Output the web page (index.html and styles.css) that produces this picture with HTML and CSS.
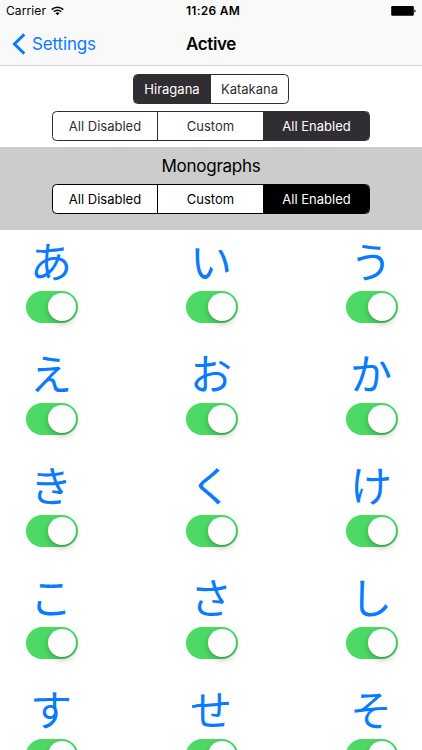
FILE: index.html
```html
<!DOCTYPE html>
<html lang="en">
<head>
<meta charset="utf-8">
<title>Active</title>
<link rel="stylesheet" href="styles.css">
</head>
<body>
<header class="top">
  <div class="status">
    <div class="carrier"><span>Carrier</span>
      <svg width="13" height="10" viewBox="0 0 13 10"><g fill="none" stroke="#000" stroke-width="1.5"><path d="M.7 3.6a8.3 8.3 0 0 1 11.6 0"/><path d="M2.8 5.8a5.3 5.3 0 0 1 7.4 0"/></g><path d="M6.5 9.3 4.5 7.3a2.9 2.9 0 0 1 4 0z"/></svg>
    </div>
    <div class="time">11:26 AM</div>
    <svg class="battery" width="25" height="10" viewBox="0 0 25 10"><rect x=".2" y=".1" width="22.6" height="9.7" rx="1.2"/><path d="M23.4 3.4q1.2.2 1.2 1.6t-1.2 1.6z"/></svg>
  </div>
  <nav class="nav">
    <a class="back"><svg width="14" height="22" viewBox="0 0 14 22"><path d="M12.3 1.4 2.4 11l9.9 9.6" fill="none" stroke="#0a7aff" stroke-width="2.9"/></svg><span>Settings</span></a>
    <h1>Active</h1>
  </nav>
</header>
<section class="filters">
  <div class="segments pair"><span class="on">Hiragana</span><span>Katakana</span></div>
  <div class="segments"><span>All Disabled</span><span>Custom</span><span class="on">All Enabled</span></div>
</section>
<section class="group">
  <h2>Monographs</h2>
  <div class="segments black"><span>All Disabled</span><span>Custom</span><span class="on">All Enabled</span></div>
</section>
<main class="grid" lang="ja">
  <div class="cell"><span class="kana">あ</span><i class="switch"></i></div>
  <div class="cell"><span class="kana">い</span><i class="switch"></i></div>
  <div class="cell"><span class="kana">う</span><i class="switch"></i></div>
  <div class="cell"><span class="kana">え</span><i class="switch"></i></div>
  <div class="cell"><span class="kana">お</span><i class="switch"></i></div>
  <div class="cell"><span class="kana">か</span><i class="switch"></i></div>
  <div class="cell"><span class="kana">き</span><i class="switch"></i></div>
  <div class="cell"><span class="kana">く</span><i class="switch"></i></div>
  <div class="cell"><span class="kana">け</span><i class="switch"></i></div>
  <div class="cell"><span class="kana">こ</span><i class="switch"></i></div>
  <div class="cell"><span class="kana">さ</span><i class="switch"></i></div>
  <div class="cell"><span class="kana">し</span><i class="switch"></i></div>
  <div class="cell"><span class="kana">す</span><i class="switch"></i></div>
  <div class="cell"><span class="kana">せ</span><i class="switch"></i></div>
  <div class="cell"><span class="kana">そ</span><i class="switch"></i></div>
</main>
</body>
</html>
```
FILE: styles.css
```css
* { box-sizing: border-box; }
body {
  display: flex;
  flex-direction: column;
  margin: 0;
  height: 750px;
  overflow: hidden;
  background: #fff;
  color: #000;
  font-family: Inter, "Noto Sans CJK JP", sans-serif;
}
.top {
  flex: none;
  height: 66px;
  background: #f9f9f9;
  border-bottom: 1px solid #d6d6d8;
}
.status {
  display: grid;
  grid-template-columns: 1fr auto 1fr;
  align-items: center;
  height: 22px;
  padding: 0 6px;
  font-size: 12px;
  line-height: 22px;
}
.carrier { display: flex; align-items: center; gap: 5px; letter-spacing: 0.1px; }
.time { font-weight: 600; letter-spacing: 0.25px; padding-left: 4px; }
.battery { justify-self: end; }
.nav {
  display: grid;
  grid-template-columns: 1fr auto 1fr;
  align-items: center;
  height: 43px;
  padding: 0 12px;
}
.back { display: flex; align-items: center; gap: 6px; color: #0a7aff; font-size: 17px; letter-spacing: -0.15px; }
.nav h1 { margin: 0; font-size: 17px; font-weight: 600; letter-spacing: -0.4px; }
.filters {
  flex: none;
  display: flex;
  flex-direction: column;
  align-items: center;
  gap: 7px;
  height: 81px;
  padding-top: 7.5px;
}
.segments {
  --ink: #302e32;
  display: grid;
  grid-template-columns: 104px 106px 1fr;
  width: 318px;
  height: 30px;
  border: 1px solid var(--ink);
  border-radius: 4.5px;
  overflow: hidden;
  background: #fff;
  color: var(--ink);
  font-size: 13px;
  line-height: 28px;
  text-align: center;
}
.segments span + span { border-left: 1px solid var(--ink); }
.segments .on { background: var(--ink); color: #fff; }
.pair { grid-template-columns: 76px 1fr; width: 156px; }
.black { --ink: #000; }
.group {
  flex: none;
  display: flex;
  flex-direction: column;
  align-items: center;
  height: 82.5px;
  padding-top: 7px;
  background: #ccc;
}
.group h2 { margin: 0 0 6px; height: 24px; font-size: 17px; font-weight: 400; line-height: 24px; letter-spacing: -0.25px; }
.grid {
  flex: 1;
  min-height: 0;
  overflow: hidden;
  display: grid;
  grid-template-columns: repeat(3, 52px);
  justify-content: space-between;
  grid-auto-rows: 112px;
  padding: 9.5px 24px 0 26px;
}
.cell { display: flex; flex-direction: column; align-items: center; }
.kana {
  height: 52px;
  margin-left: -2px;
  font-family: "Noto Sans CJK JP", sans-serif;
  font-size: 42px;
  font-weight: 400;
  line-height: 41px;
  color: #0a7aff;
}
.switch {
  display: flex;
  justify-content: flex-end;
  width: 52px;
  height: 32px;
  padding: 2px;
  border-radius: 16px;
  background: #4cd964;
}
.switch::after {
  content: "";
  width: 28px;
  height: 28px;
  border-radius: 50%;
  background: #fff;
  box-shadow: 0 3px 6px rgba(0, 0, 0, 0.22), 0 1px 1px rgba(0, 0, 0, 0.12);
}
```
